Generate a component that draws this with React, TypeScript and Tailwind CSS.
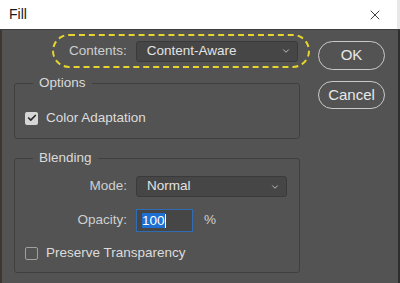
import { Check, ChevronDown, X } from "lucide-react";

const font = { fontFamily: '"Liberation Sans", Arial, sans-serif' };

function Select({ value, width }: { value: string; width: string }) {
  return (
    <div
      className={`${width} h-[21px] flex items-center justify-between pl-[10px] pr-[6px] bg-[#464646] border border-[#3a3a3a] rounded-[3px] text-[13.5px] text-[#e2e2e2]`}
    >
      <span>{value}</span>
      <ChevronDown className="w-[10px] h-[10px] text-[#d0d0d0]" strokeWidth={2} />
    </div>
  );
}

function Checkbox({ checked, label }: { checked?: boolean; label: string }) {
  return (
    <div className="flex items-center gap-[8px]">
      {checked ? (
        <div className="w-[13px] h-[13px] rounded-[2px] bg-[#d6d6d6] flex items-center justify-center">
          <Check className="w-[10px] h-[10px] text-[#2a2a2a]" strokeWidth={4} />
        </div>
      ) : (
        <div className="w-[13px] h-[13px] rounded-[2px] border-[1.5px] border-[#a0a0a0]" />
      )}
      <span className="text-[13.5px] text-[#dcdcdc]">{label}</span>
    </div>
  );
}

function Button({ label, className }: { label: string; className: string }) {
  return (
    <div
      className={`w-[67px] flex items-center justify-center rounded-full border-[1.5px] border-[#c9c9c9] text-[15px] text-[#e8e8e8] ${className}`}
    >
      {label}
    </div>
  );
}

export default function App() {
  return (
    <div className="w-[400px] h-[283px] flex flex-col overflow-hidden bg-[#535353]" style={font}>
      <div className="h-[29px] flex items-center justify-between pl-[9px] pr-[14px] bg-white border-r-[3px] border-[#e8e8e8]">
        <span className="text-[14px] text-[#1a1a1a]">Fill</span>
        <X className="w-[16px] h-[16px] text-[#222]" strokeWidth={1.3} />
      </div>
      <div className="h-px bg-[#3e3e3e]" />
      <div className="flex-1 flex border-l-2 border-[#3d3632] border-r-2 border-r-[#2e2e2e]">
        <div className="w-[296px] ml-[12px] flex flex-col">
          <div className="mt-[4px] ml-[38px] w-[258px] h-[34px] flex items-center gap-[9px] pl-[15px] border-2 border-dashed border-[#e6d52c] rounded-full">
            <span className="text-[13.5px] text-[#cfcfcf]">Contents:</span>
            <Select value="Content-Aware" width="w-[162px]" />
          </div>

          <fieldset className="mt-[6px] w-[286px] h-[65px] border border-[#3f3f3f] rounded-[3px]">
            <legend className="ml-[18px] px-[6px] text-[13.5px] text-[#dadada] leading-[18px]">Options</legend>
            <div className="pl-[10px] pt-[16px]">
              <Checkbox checked label="Color Adaptation" />
            </div>
          </fieldset>

          <fieldset className="mt-[10px] w-[286px] h-[124px] border border-[#3f3f3f] rounded-[3px]">
            <legend className="ml-[18px] px-[6px] text-[13.5px] text-[#dadada] leading-[18px]">Blending</legend>
            <div className="flex items-center gap-[9px] pt-[9px]">
              <span className="w-[112px] text-right text-[13.5px] text-[#cfcfcf]">Mode:</span>
              <Select value="Normal" width="w-[151px]" />
            </div>
            <div className="flex items-center gap-[9px] mt-[12px]">
              <span className="w-[112px] text-right text-[13.5px] text-[#cfcfcf]">Opacity:</span>
              <div className="w-[57px] h-[23px] flex items-center pl-[5px] bg-[#464646] border border-[#2f6cb3]">
                <span className="bg-[#1f6fd2] text-white text-[13.5px] leading-[15px]">100</span>
                <span className="w-px h-[14px] bg-white" />
              </div>
              <span className="ml-[2px] text-[13.5px] text-[#cfcfcf]">%</span>
            </div>
            <div className="pl-[10px] mt-[11px]">
              <Checkbox label="Preserve Transparency" />
            </div>
          </fieldset>
        </div>

        <div className="ml-[8px] flex flex-col pt-[11px] gap-[11px]">
          <Button label="OK" className="h-[29px]" />
          <Button label="Cancel" className="h-[28px]" />
        </div>
      </div>
    </div>
  );
}
